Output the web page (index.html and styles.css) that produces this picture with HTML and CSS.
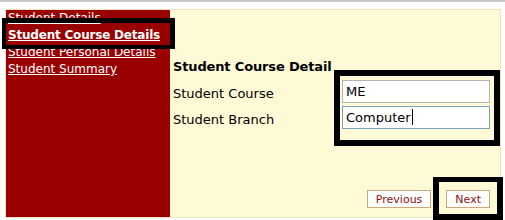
FILE: index.html
```html
<!DOCTYPE html>
<html lang="en">

<head>
    <meta charset="UTF-8">
    <meta name="viewport" content="width=device-width, initial-scale=1.0">
    <title>Student Course Details</title>
    <link rel="stylesheet" href="styles.css">
</head>

<body>
    <div class="topline"></div>

    <div class="frame">
        <div class="sidebar">
            <a href="#">Student Details</a>
            <a href="#" class="active">Student Course Details</a>
            <a href="#">Student Personal Details</a>
            <a href="#">Student Summary</a>
        </div>

        <div class="content">
            <div class="heading">Student Course Detail</div>
            <div class="form-grid">
                <label for="course">Student Course</label>
                <input id="course" type="text" value="ME">
                <label for="branch">Student Branch</label>
                <div class="field focused">Computer<span class="caret"></span></div>
            </div>
            <div class="actions">
                <button class="btn">Previous</button>
                <button class="btn">Next</button>
            </div>
        </div>
    </div>

    <!-- highlight boxes drawn over the screen -->
    <div class="mark mark-link"></div>
    <div class="mark mark-inputs"></div>
    <div class="mark mark-next"></div>
</body>

</html>
```

FILE: styles.css
```css
*,
*::before,
*::after {
    box-sizing: border-box;
}

body {
    margin: 0;
    padding: 0;
    background: #ffffff;
    font-family: "DejaVu Sans", Verdana, sans-serif;
    font-size: 12px;
    position: relative;
    height: 220px;
    overflow: hidden;
}

.topline {
    height: 2px;
    background-color: #c8c8c8;
}

.frame {
    display: flex;
    margin: 7px 4px 0 5px;
    height: 209px;
    border: 1px solid #f0e2bd;
    background-color: #fffad6;
}

.sidebar {
    width: 165px;
    background-color: #990000;
    display: flex;
    flex-direction: column;
    padding-left: 2px;
}

.sidebar a {
    color: #ffffff;
    line-height: 17px;
    text-decoration: underline;
}

.sidebar a.active {
    font-weight: bold;
    letter-spacing: -0.2px;
}

.content {
    flex: 1;
    display: flex;
    flex-direction: column;
    padding: 48px 10px 9px 3px;
    font-size: 13px;
}

.heading {
    font-weight: bold;
    line-height: 18px;
    letter-spacing: -0.15px;
    color: #000000;
}

.form-grid {
    display: grid;
    grid-template-columns: 169px 148px;
    grid-auto-rows: 26px;
    align-items: center;
    margin-top: 2px;
}

.form-grid label {
    color: #000000;
    padding-top: 4px;
}

.form-grid input,
.form-grid .field {
    height: 23px;
    width: 148px;
    border: 1px solid #b4b4b4;
    background: #ffffff;
    font-family: "DejaVu Sans", Verdana, sans-serif;
    font-size: 13px;
    padding: 0 3px;
    outline: none;
    color: #000000;
}

.form-grid .field {
    display: flex;
    align-items: center;
}

.form-grid .field.focused {
    border-color: #7ba4c4;
}

.caret {
    display: inline-block;
    width: 1px;
    height: 16px;
    margin-left: 1px;
    background-color: #000000;
}

.actions {
    margin-top: auto;
    display: flex;
    justify-content: flex-end;
    gap: 15px;
}

.btn {
    height: 18px;
    padding: 0 8px;
    border: 1px solid #c9a880;
    background-color: #ffffff;
    color: #8b1010;
    font-family: "DejaVu Sans", Verdana, sans-serif;
    font-size: 11px;
    cursor: pointer;
}

.mark {
    position: absolute;
    border: 5px solid #000000;
}

.mark-link {
    left: 2px;
    top: 18px;
    width: 173px;
    height: 31px;
    border-width: 5px 5px 4px 4px;
}

.mark-inputs {
    left: 334px;
    top: 70px;
    width: 166px;
    height: 76px;
    border-width: 6px;
}

.mark-next {
    left: 433px;
    top: 177px;
    width: 70px;
    height: 43px;
    border-width: 5px 6px 6px 6px;
}
```
